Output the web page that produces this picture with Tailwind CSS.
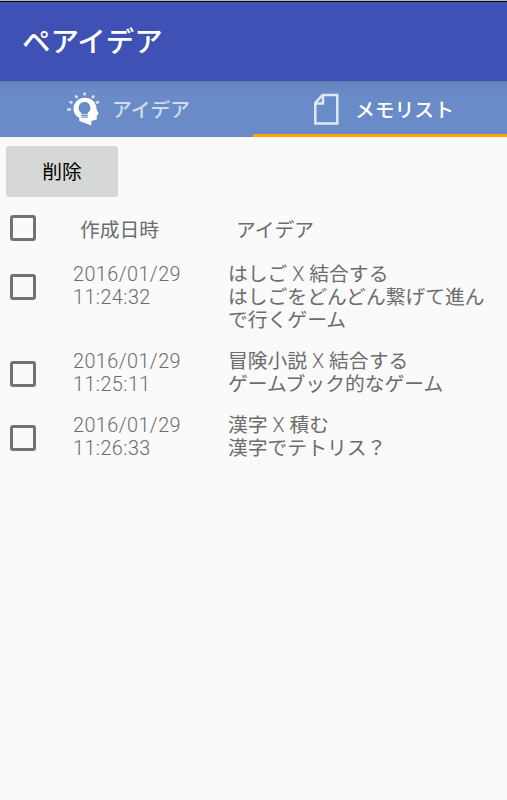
<!DOCTYPE html>
<html lang="ja">
<head>
    <meta charset="UTF-8">
    <meta name="viewport" content="width=device-width, initial-scale=1.0">
    <title>ペアイデア</title>
    <script src="https://cdn.jsdelivr.net/npm/@tailwindcss/browser@4"></script>
</head>
<body class="bg-[#fafafa] h-screen overflow-hidden font-[Roboto,'Noto_Sans_CJK_JP',sans-serif] text-[19.8px] leading-[23.4px] text-[#6c6c6c]">
    <header class="h-[81px] bg-[#3f51b5] border-t border-[#b4b9b9]">
        <div class="h-full border-t border-black flex items-center pl-[22px] pt-[3px]">
            <h1 class="text-[28.4px] font-medium text-white leading-none">ペアイデア</h1>
        </div>
    </header>

    <nav class="flex h-14 bg-linear-to-b from-[#6382b9] to-[#698cc8] to-20% font-medium">
        <div class="w-[253px] flex items-center pl-[66px] text-white/70">
            <svg class="w-[34px] h-[36px] shrink-0" viewBox="0 0 34 36">
                <g stroke="#fff" stroke-opacity=".75" stroke-width="2.5">
                    <path d="M18.700 1.500v3M9.500 4.500l1.800 2.500M28 4.500l-1.800 2.500M3.500 10.500l3 1.700M33 10.500l-3 1.700M1 18.500h4"/>
                </g>
                <path fill="#fff" fill-rule="evenodd" d="M18.800 6.800C25.500 6.800 30.500 11.500 30.500 18l2.300 5-2 1v4.500l-5.500 1.500v4.500l-12-4.500V27C9.800 25 7.500 22 7.500 18c0-6.500 5-11.200 11.300-11.200zM18.500 11a6 6 0 0 0-3.200 11V27h6.400v-5A6 6 0 0 0 18.500 11z"/>
                <path stroke="#fff" stroke-opacity=".7" stroke-width="1.200" d="M15.300 23.500h6.400M15.300 25.800h6.400"/>
            </svg>
            <span class="ml-3 pt-1">アイデア</span>
        </div>
        <div class="flex-1 flex items-center pl-[60px] pt-[3px] border-b-3 border-[#ffa40c] text-white">
            <svg class="w-[26px] h-[32px] shrink-0" viewBox="0 0 26 32" fill="none" stroke="#fff" stroke-opacity=".8" stroke-width="2.500">
                <path d="M9.500 2H24.300v28.500H2.300V10zM10 2v8.500H2.300"/>
            </svg>
            <span class="ml-4 pt-[3px]">メモリスト</span>
        </div>
    </nav>

    <main>
        <button class="block mt-[9px] ml-1.5 w-28 h-[51px] pt-0.5 rounded-[3px] bg-[#d6d7d7] text-black">削除</button>

        <div class="flex mt-[18px] h-[47.500px]">
            <span class="ml-[9.500px] w-[26px] h-[26px] border-3 border-[#727272] rounded-[3px]"></span>
            <span class="ml-[44.500px] mt-1 w-[156px]">作成日時</span>
            <span class="mt-1">アイデア</span>
        </div>

        <div class="flex pb-[17.200px]">
            <span class="ml-[9.500px] mt-[11.500px] w-[26px] h-[26px] border-3 border-[#727272] rounded-[3px]"></span>
            <span class="ml-[37.500px] w-[155px] font-light tracking-[0.45px]">2016/01/29<br>11:24:32</span>
            <span class="whitespace-nowrap">はしご <span class="font-light">X</span> 結合する<br>はしごをどんどん繋げて進ん<br>で行くゲーム</span>
        </div>

        <div class="flex pb-[17.200px]">
            <span class="ml-[9.500px] mt-[11.500px] w-[26px] h-[26px] border-3 border-[#727272] rounded-[3px]"></span>
            <span class="ml-[37.500px] w-[155px] font-light tracking-[0.45px]">2016/01/29<br>11:25:11</span>
            <span class="whitespace-nowrap">冒険小説 <span class="font-light">X</span> 結合する<br>ゲームブック的なゲーム</span>
        </div>

        <div class="flex pb-[17.200px]">
            <span class="ml-[9.500px] mt-[11.500px] w-[26px] h-[26px] border-3 border-[#727272] rounded-[3px]"></span>
            <span class="ml-[37.500px] w-[155px] font-light tracking-[0.45px]">2016/01/29<br>11:26:33</span>
            <span class="whitespace-nowrap">漢字 <span class="font-light">X</span> 積む<br>漢字でテトリス？</span>
        </div>
    </main>
</body>
</html>
